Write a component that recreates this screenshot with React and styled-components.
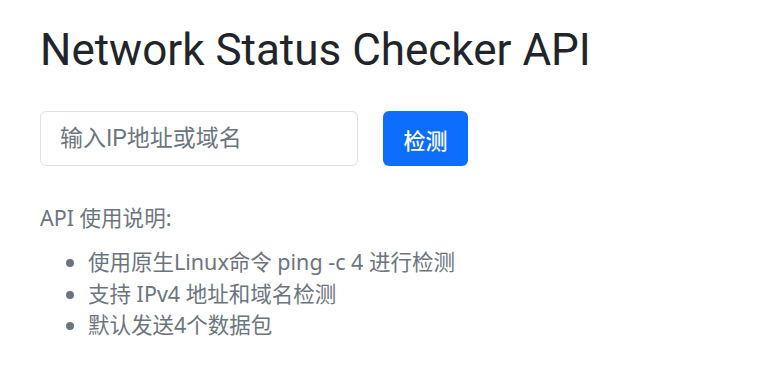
import React, { useState } from 'react'
import styled, { createGlobalStyle } from 'styled-components'

const GlobalStyle = createGlobalStyle`
  body {
    margin: 0;
    background: #fff;
    font-family: Roboto, "Noto Sans CJK SC", sans-serif;
    color: #212529;
  }
`

const Page = styled.div`
  padding: 24px 40px;
`
const Title = styled.h1`
  margin: 0 0 34px;
  font-size: 44px;
  font-weight: 400;
  line-height: 53px;
  color: #212529;
`
const Form = styled.div`
  display: flex;
  gap: 25px;
  margin-bottom: 37px;
`
const Input = styled.input`
  width: 318px;
  height: 55px;
  box-sizing: border-box;
  padding: 0 19px;
  font-family: inherit;
  font-size: 23px;
  border: 1px solid #dee2e6;
  border-radius: 6px;
  color: #212529;
  &::placeholder {
    color: #6c757d;
  }
`
const Button = styled.button`
  width: 85px;
  height: 55px;
  border: none;
  border-radius: 6px;
  background: #0d6efd;
  color: #fff;
  font-family: inherit;
  font-size: 22px;
  font-weight: 500;
`
const Info = styled.div`
  color: #6c757d;
  font-family: "Noto Sans", "Noto Sans CJK SC", sans-serif;
  font-size: 21.5px;
  line-height: 30px;
`
const InfoTitle = styled.p`
  margin: 0 0 13px;
`
const List = styled.ul`
  margin: 0;
  padding-left: 48px;
  line-height: 31.5px;
`

const App = () => {
  const [host, setHost] = useState('')
  return (
    <Page>
      <GlobalStyle />
      <Title>Network Status Checker API</Title>
      <Form>
        <Input placeholder="输入IP地址或域名" value={host} onChange={e => setHost(e.target.value)} />
        <Button>检测</Button>
      </Form>
      <Info>
        <InfoTitle>API 使用说明:</InfoTitle>
        <List>
          <li>使用原生Linux命令 ping -c 4 进行检测</li>
          <li>支持 IPv4 地址和域名检测</li>
          <li>默认发送4个数据包</li>
        </List>
      </Info>
    </Page>
  )
}

export default App
